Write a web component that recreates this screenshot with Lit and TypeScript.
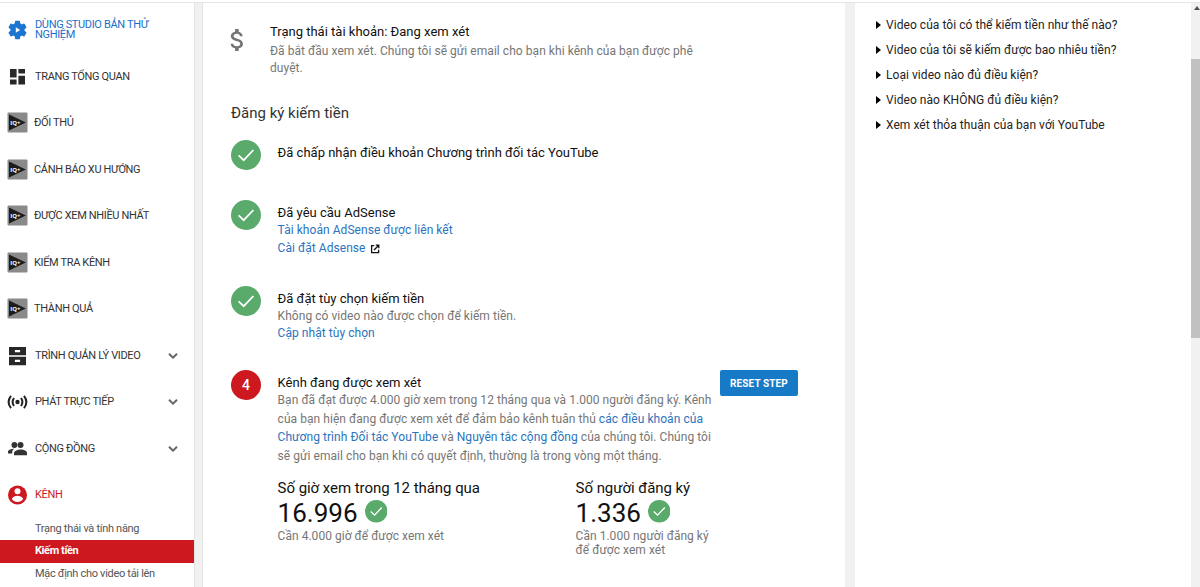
import { LitElement, css, html, nothing, svg } from "lit";
import { customElement, property } from "lit/decorators.js";
import { classMap } from "lit/directives/class-map.js";
import { when } from "lit/directives/when.js";

interface NavItem {
  icon: string;
  label: string;
  expandable?: boolean;
  tone?: "blue" | "red";
}

const NAV_ITEMS: NavItem[] = [
  { icon: "studio", label: "DÙNG STUDIO BẢN THỬ NGHIỆM", tone: "blue" },
  { icon: "dashboard", label: "TRANG TỔNG QUAN" },
  { icon: "iq", label: "ĐỐI THỦ" },
  { icon: "iq", label: "CẢNH BÁO XU HƯỚNG" },
  { icon: "iq", label: "ĐƯỢC XEM NHIỀU NHẤT" },
  { icon: "iq", label: "KIỂM TRA KÊNH" },
  { icon: "iq", label: "THÀNH QUẢ" },
  { icon: "videos", label: "TRÌNH QUẢN LÝ VIDEO", expandable: true },
  { icon: "live", label: "PHÁT TRỰC TIẾP", expandable: true },
  { icon: "community", label: "CỘNG ĐỒNG", expandable: true },
  { icon: "channel", label: "KÊNH", tone: "red" },
];

const SUB_ITEMS = [
  { label: "Trạng thái và tính năng" },
  { label: "Kiếm tiền", active: true },
  { label: "Mặc định cho video tải lên" },
];

const QUESTIONS = [
  "Video của tôi có thể kiếm tiền như thế nào?",
  "Video của tôi sẽ kiếm được bao nhiêu tiền?",
  "Loại video nào đủ điều kiện?",
  "Video nào KHÔNG đủ điều kiện?",
  "Xem xét thỏa thuận của bạn với YouTube",
];

// All shapes are drawn on a 20x20 grid.
const ICONS: Record<string, unknown> = {
  studio: svg`
    <g fill="#1a76cf">
      <circle cx="10.5" cy="10" r="7.2" />
      <rect x="7.9" y="0.8" width="5.2" height="18.4" rx="1" />
      <rect x="7.9" y="0.8" width="5.2" height="18.4" rx="1" transform="rotate(60 10.5 10)" />
      <rect x="7.9" y="0.8" width="5.2" height="18.4" rx="1" transform="rotate(120 10.5 10)" />
    </g>
    <path d="M8.8 7.2 13.2 10 8.8 12.8Z" fill="#fff" />`,
  dashboard: svg`
    <path
      d="M3 2h6.6v8.5H3zM11.4 2h6.6v4.6h-6.6zM3 12.6h6.6v4.9H3zM11.4 8.7H18v8.8h-6.6z"
      fill="#282828"
    />`,
  iq: svg`
    <rect x="0.5" y="-0.5" width="20" height="20" rx="1" fill="#8a8a8a" />
    <path d="M2 1.5 18.8 9.5 2 17.5Z" fill="#1c1c1c" />
    <text x="3.2" y="11.7" font-size="6" font-weight="700" fill="#fff">IQ+</text>`,
  videos: svg`
    <path d="M2 1h17v8.3H2zM2 10.8h17v8.4H2z" fill="#282828" />
    <path d="M7.9 3.9h5.2v2.3H7.9zM7.9 13.7h5.2V16H7.9z" fill="#fff" />`,
  live: svg`
    <circle cx="10.5" cy="10" r="2.2" fill="#222" />
    <path
      d="M7 6Q4.2 10 7 14M14 6Q16.8 10 14 14M4 3.8Q-.8 10 4 16.2M17 3.8Q21.8 10 17 16.2"
      fill="none"
      stroke="#222"
      stroke-width="2"
    />`,
  community: svg`
    <circle cx="7.4" cy="6" r="2.9" fill="#333" />
    <circle cx="13.5" cy="6" r="3" fill="#333" />
    <path d="M1 14.4v-1.5c0-2.4 3.5-3.2 6.4-3.2-1.6 1.1-2.2 2.1-2.2 3.3v1.4z" fill="#333" />
    <path d="M7 16.2V14c0-2.4 4-3.6 6.8-3.6s6.2 1.2 6.2 3.6v2.2z" fill="#333" />`,
  channel: svg`
    <circle cx="10.5" cy="10" r="9.5" fill="#cc181e" />
    <circle cx="10.5" cy="6.3" r="3" fill="#fff" />
    <path d="M4.8 14c1.1-2.3 3.5-3.2 5.7-3.2s4.6.9 5.7 3.2c-1.3 2-3.4 3-5.7 3s-4.4-1-5.7-3z" fill="#fff" />`,
};

@customElement("nav-entry")
export class NavEntry extends LitElement {
  @property({ type: Object }) item: NavItem | null = null;

  render() {
    const tone = this.item?.tone ?? "plain";
    return html`
      <div class="entry entry--${tone}">
        <svg class="entry__icon" viewBox="0 0 20 20">
          ${ICONS[this.item?.icon ?? ""] ?? nothing}
        </svg>
        <span
          class=${classMap({
            entry__label: true,
            "entry__label--tight": this.item?.icon === "iq",
          })}
          >${this.item?.label}</span
        >
        ${when(
          this.item?.expandable,
          () => html`<svg class="entry__chevron" viewBox="0 0 10 8">
            <path d="M1 1.8 5 5.6 9 1.8" />
          </svg>`,
        )}
      </div>
    `;
  }

  static styles = css`
    :host {
      display: block;
    }

    .entry {
      align-items: center;
      color: #333;
      display: flex;
      gap: 8px;
      height: 46.5px;
      padding: 0 16px 0 7px;
    }

    .entry--blue {
      color: #1a6fc9;
    }

    .entry--red {
      color: #cc181e;
    }

    .entry__icon {
      flex: none;
      font-family: "Open Sans", sans-serif;
      height: 20px;
      margin: 0 0.5px 0 -0.5px;
      overflow: visible;
      width: 20px;
    }

    .entry__label {
      flex: 1;
      font-size: 11px;
      letter-spacing: -0.35px;
      line-height: 10px;
    }

    .entry__label--tight {
      margin-left: -1px;
    }

    .entry__chevron {
      fill: none;
      height: 8px;
      stroke: #666;
      stroke-width: 2;
      width: 10px;
    }
  `;
}

@customElement("check-badge")
export class CheckBadge extends LitElement {
  render() {
    return html`
      <svg class="badge" viewBox="0 0 30 30">
        <circle cx="15" cy="15" r="15" fill="#5aaa6b" />
        <path d="M7.6 15.4 12.7 20.2 22.4 10" />
      </svg>
    `;
  }

  static styles = css`
    :host {
      display: block;
      flex: none;
      height: 30px;
      width: 30px;
    }

    .badge {
      display: block;
      fill: none;
      height: 100%;
      stroke-width: 1.8;
      width: 100%;
    }

    .badge path {
      stroke: #fff;
    }
  `;
}

@customElement("app-root")
export class AppRoot extends LitElement {
  render() {
    return html`
      <div class="page">
        <nav class="sidebar">
          ${NAV_ITEMS.map(
            (item) => html`<nav-entry .item=${item}></nav-entry>`,
          )}
          <div class="sub">
            ${SUB_ITEMS.map(
              (item) => html`<div
                class=${classMap({
                  sub__item: true,
                  "sub__item--active": !!item.active,
                })}
              >
                ${item.label}
              </div>`,
            )}
          </div>
        </nav>
        <main class="main">${this.renderStatus()} ${this.renderSteps()}</main>
        <aside class="help">
          ${QUESTIONS.map(
            (question) => html`<div class="help__row">
              <svg class="help__arrow" viewBox="0 0 5 8">
                <path d="M0 0 5 4 0 8Z" />
              </svg>
              <span>${question}</span>
            </div>`,
          )}
        </aside>
        <div class="scrollbar">
          <svg class="scrollbar__arrow" viewBox="0 0 6 4">
            <path d="M0 4 3 0 6 4Z" />
          </svg>
          <div class="scrollbar__thumb"></div>
        </div>
      </div>
    `;
  }

  renderStatus() {
    return html`
      <section class="status">
        <svg class="status__icon" viewBox="5 3 14 18">
          <path
            d="M11.8 10.9c-2.27-.59-3-1.2-3-2.15 0-1.09 1.01-1.85 2.7-1.85 1.78 0 2.44.85 2.5 2.1h2.21c-.07-1.72-1.12-3.3-3.21-3.81V3h-3v2.16c-1.94.42-3.5 1.68-3.5 3.61 0 2.31 1.91 3.46 4.7 4.13 2.5.6 3 1.48 3 2.41 0 .69-.49 1.79-2.7 1.79-2.06 0-2.87-.92-2.98-2.1h-2.2c.12 2.19 1.76 3.42 3.68 3.83V21h3v-2.15c1.95-.37 3.5-1.5 3.5-3.55 0-2.84-2.43-3.81-4.7-4.4z"
          />
        </svg>
        <div>
          <div class="title">Trạng thái tài khoản: Đang xem xét</div>
          <div class="text text--status">
            Đã bắt đầu xem xét. Chúng tôi sẽ gửi email cho bạn khi kênh của bạn
            được phê<br />duyệt.
          </div>
        </div>
      </section>
      <h2 class="heading">Đăng ký kiếm tiền</h2>
    `;
  }

  renderSteps() {
    return html`
      <section class="step step--terms">
        <check-badge></check-badge>
        <div class="title">
          Đã chấp nhận điều khoản Chương trình đối tác YouTube
        </div>
      </section>
      <section class="step step--adsense">
        <check-badge></check-badge>
        <div>
          <div class="title">Đã yêu cầu AdSense</div>
          <div class="text link">Tài khoản AdSense được liên kết</div>
          <div class="text text--settings">
            <span class="link">Cài đặt Adsense</span>
            <svg class="external" viewBox="0 0 10 10">
              <path d="M4.2 1.6H1.6V8.6H8.6V5.8M5.8 1.2H8.8V4.2M8.8 1.2 4 6" />
            </svg>
          </div>
        </div>
      </section>
      <section class="step step--options">
        <check-badge></check-badge>
        <div>
          <div class="title">Đã đặt tùy chọn kiếm tiền</div>
          <div class="text">
            Không có video nào được chọn để kiếm tiền.
          </div>
          <div class="text link">Cập nhật tùy chọn</div>
        </div>
      </section>
      <section class="step step--review">
        <div class="number">4</div>
        <div class="review">
          <div class="title">Kênh đang được xem xét</div>
          <div class="text text--review">
            Bạn đã đạt được 4.000 giờ xem trong 12 tháng qua và 1.000 người đăng
            ký. Kênh<br />của bạn hiện đang được xem xét để đảm bảo kênh tuân
            thủ <span class="link">các điều khoản của</span><br /><span
              class="link"
              >Chương trình Đối tác YouTube</span
            >
            và <span class="link">Nguyên tắc cộng đồng</span> của chúng tôi.
            Chúng tôi<br />sẽ gửi email cho bạn khi có quyết định, thường là
            trong vòng một tháng.
          </div>
          <div class="stats">
            <div class="stat">
              <div class="stat__label">Số giờ xem trong 12 tháng qua</div>
              <div class="stat__value">
                16.996 <check-badge class="stat__badge"></check-badge>
              </div>
              <div class="stat__note">Cần 4.000 giờ để được xem xét</div>
            </div>
            <div class="stat">
              <div class="stat__label">Số người đăng ký</div>
              <div class="stat__value">
                1.336 <check-badge class="stat__badge"></check-badge>
              </div>
              <div class="stat__note">
                Cần 1.000 người đăng ký<br />để được xem xét
              </div>
            </div>
          </div>
        </div>
        <button class="reset">RESET STEP</button>
      </section>
    `;
  }

  static styles = css`
    :host {
      display: block;
      font-family: Roboto, sans-serif;
    }

    .page {
      background: #f1f1f1;
      border-top: 1px solid #e6e6e6;
      box-sizing: border-box;
      display: flex;
      height: 585px;
      margin-top: 2px;
      overflow: hidden;
      white-space: nowrap;
    }

    .sidebar {
      background: #fff;
      border-right: 1px solid #e4e4e4;
      box-sizing: border-box;
      flex: none;
      margin-right: 7px;
      padding-top: 4px;
      white-space: normal;
      width: 195px;
    }

    .sub {
      margin-top: -1px;
    }

    .sub__item {
      color: #555;
      font-size: 11px;
      letter-spacing: -0.3px;
      line-height: 22.5px;
      padding-left: 35px;
    }

    .sub__item--active {
      background: #cc181e;
      color: #fff;
      font-weight: 700;
      letter-spacing: -0.4px;
    }

    .main {
      background: #fff;
      border-left: 1px solid #e4e4e4;
      box-sizing: border-box;
      flex: none;
      margin-right: 10px;
      padding-left: 28px;
      width: 643px;
    }

    .status {
      box-sizing: border-box;
      display: flex;
      gap: 26px;
      height: 100px;
      padding-top: 20px;
    }

    .status__icon {
      fill: #757575;
      height: 22px;
      margin: 6px -2px 0 -2px;
      width: 17px;
    }

    .title {
      color: #111;
      font-size: 13px;
      line-height: 18px;
    }

    .text {
      color: #767676;
      font-size: 12px;
      letter-spacing: 0.05px;
      line-height: 17px;
    }

    .text--status {
      margin-top: 2px;
    }

    .link {
      color: #2b74bd;
    }

    .heading {
      color: #333;
      font-size: 15px;
      font-weight: 400;
      line-height: 20px;
      margin: 0 0 17px;
    }

    .step {
      align-items: flex-start;
      box-sizing: border-box;
      display: flex;
      gap: 16.6px;
    }

    .step > :nth-child(2) {
      margin-top: 4px;
    }

    .step--terms {
      height: 60px;
    }

    .step--adsense {
      height: 86px;
    }

    .step--options {
      height: 84px;
    }

    .text--settings {
      align-items: center;
      display: flex;
      gap: 4px;
      line-height: 19px;
    }

    .external {
      fill: none;
      height: 10px;
      stroke: #111;
      stroke-width: 1.3;
      width: 10px;
    }

    .number {
      background: #cc181e;
      border-radius: 50%;
      color: #fff;
      flex: none;
      font-size: 14px;
      font-weight: 500;
      height: 30px;
      line-height: 30px;
      text-align: center;
      width: 30px;
    }

    .review {
      width: 434px;
    }

    .text--review {
      line-height: 18.6px;
      margin-top: -1px;
    }

    .stats {
      display: flex;
      margin-top: 13px;
    }

    .stat:first-child {
      width: 298px;
    }

    .stat__label {
      color: #111;
      font-size: 15px;
      letter-spacing: -0.05px;
      line-height: 20px;
    }

    .stat__value {
      color: #111;
      display: flex;
      font-size: 26px;
      gap: 7px;
      line-height: 30px;
    }

    .stat__badge {
      height: 22.5px;
      margin-top: 2px;
      width: 22.5px;
    }

    .stat__note {
      color: #767676;
      font-size: 12px;
      letter-spacing: 0.03px;
      line-height: 14px;
      padding-top: 1px;
    }

    .reset {
      background: #167ac6;
      border: 0;
      border-radius: 2px;
      color: #fff;
      font: 700 10px Roboto, sans-serif;
      height: 26px;
      letter-spacing: 0.1px;
      margin-left: -8.2px;
      padding: 0;
      width: 78px;
    }

    .help {
      background: #fff;
      flex: 1;
      padding: 9px 0 0 21px;
    }

    .help__row {
      align-items: center;
      color: #222;
      display: flex;
      font-size: 12px;
      gap: 5px;
      height: 25.1px;
      letter-spacing: 0.05px;
    }

    .help__arrow {
      height: 8px;
      width: 5px;
    }

    .scrollbar {
      background: #f1f1f1;
      margin-top: -3px;
      width: 9px;
    }

    .scrollbar__arrow {
      display: block;
      fill: #505050;
      height: 4px;
      margin: 6px 0 49px 3px;
      width: 6px;
    }

    .scrollbar__thumb {
      background: #c1c1c1;
      height: 279px;
    }
  `;
}

declare global {
  interface HTMLElementTagNameMap {
    "app-root": AppRoot;
    "check-badge": CheckBadge;
    "nav-entry": NavEntry;
  }
}
